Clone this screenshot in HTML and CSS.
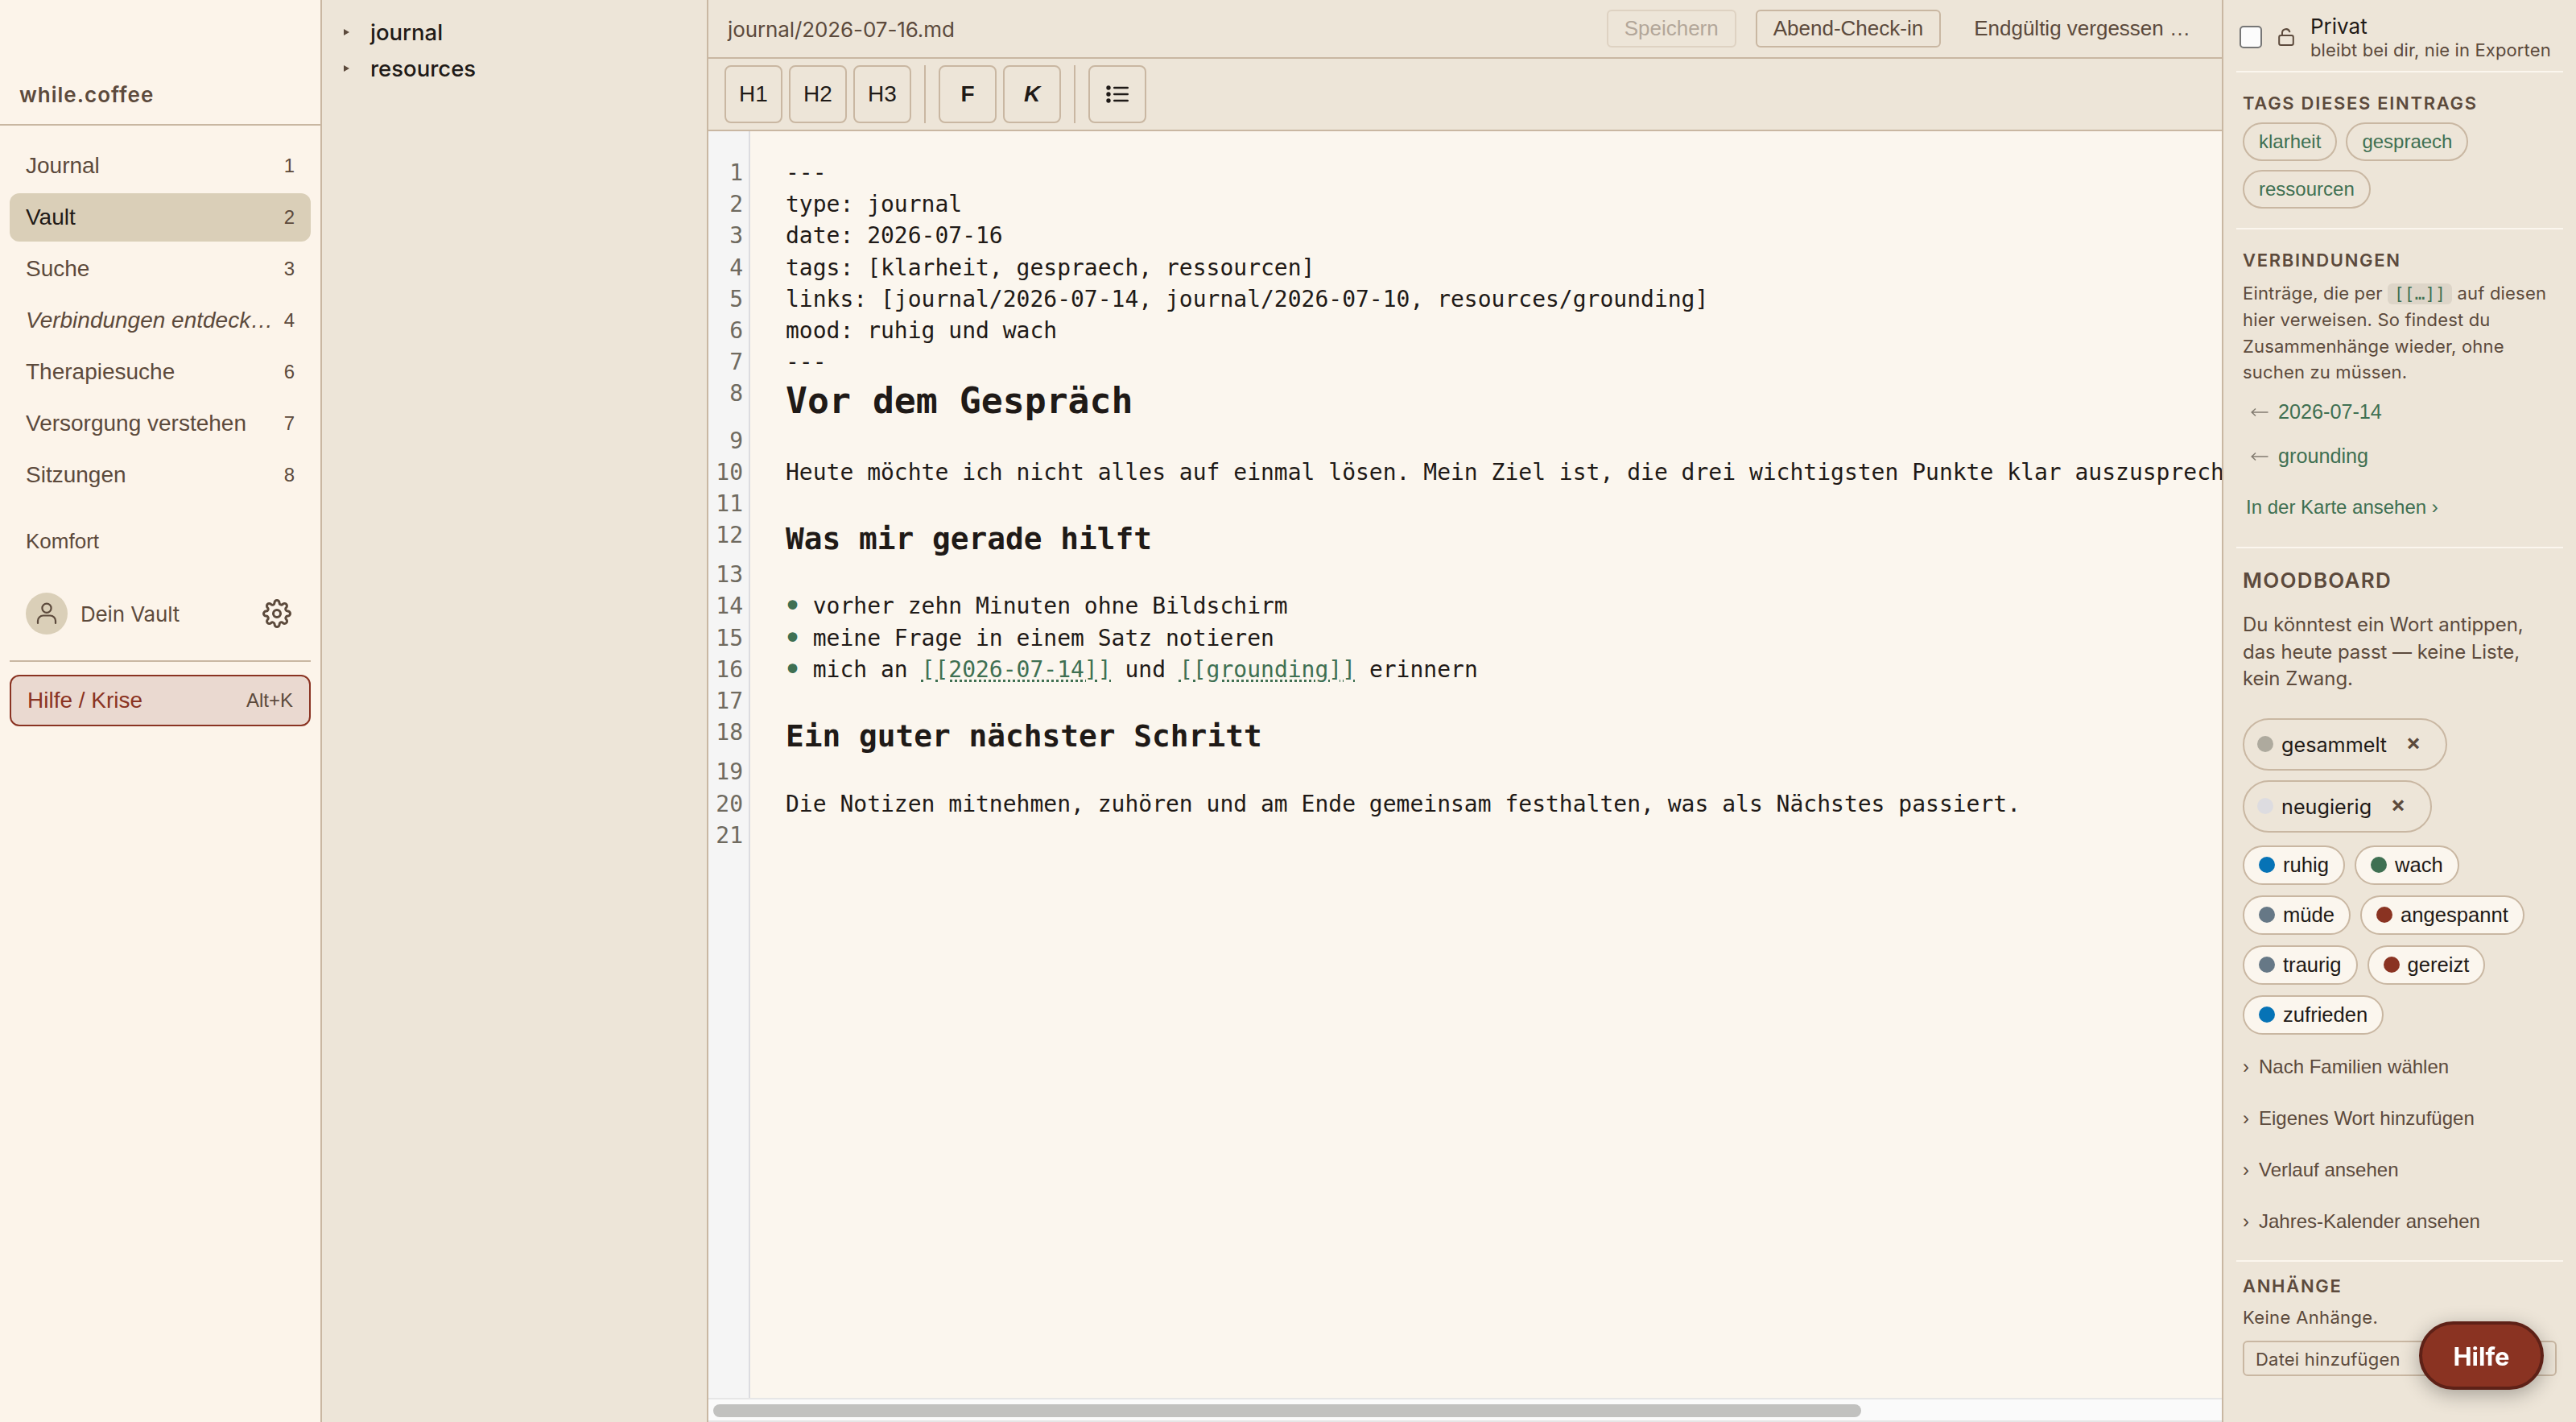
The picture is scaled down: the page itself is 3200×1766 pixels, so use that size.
FILE: index.html
```html
<!DOCTYPE html>
<html lang="de">
<head>
  <meta charset="UTF-8">
  <meta name="viewport" content="width=device-width, initial-scale=1">
  <title>while.coffee</title>
  <link rel="stylesheet" href="styles.css">
</head>
<body>
  <div class="app">

    <!-- Sidebar -->
    <aside class="sidebar">
      <div class="brand">while.coffee</div>
      <nav class="nav">
        <a class="nav-item"><span class="nav-label">Journal</span><kbd>1</kbd></a>
        <a class="nav-item active"><span class="nav-label">Vault</span><kbd>2</kbd></a>
        <a class="nav-item"><span class="nav-label">Suche</span><kbd>3</kbd></a>
        <a class="nav-item"><span class="nav-label discover">Verbindungen entdecken</span><kbd>4</kbd></a>
        <a class="nav-item"><span class="nav-label">Therapiesuche</span><kbd>6</kbd></a>
        <a class="nav-item"><span class="nav-label">Versorgung verstehen</span><kbd>7</kbd></a>
        <a class="nav-item"><span class="nav-label">Sitzungen</span><kbd>8</kbd></a>
      </nav>
      <a class="comfort">Komfort</a>
      <div class="account">
        <span class="avatar">
          <svg width="28" height="28" viewBox="0 0 28 28" fill="none" stroke="currentColor" stroke-width="2.2" stroke-linecap="round">
            <circle cx="14" cy="7.3" r="5.6"/>
            <path d="M3 26v-3a6.500 6.500 0 0 1 6.500-6.500h9a6.500 6.500 0 0 1 6.500 6.500v3"/>
          </svg>
        </span>
        <span class="account-name">Dein Vault</span>
        <svg class="gear" width="36" height="36" viewBox="0 0 24 24" fill="none" stroke="currentColor" stroke-width="2" stroke-linecap="round" stroke-linejoin="round">
          <circle cx="12" cy="12" r="3"/>
          <path d="M19.4 15a1.65 1.65 0 0 0 .33 1.82l.06.06a2 2 0 0 1-2.83 2.83l-.06-.06a1.65 1.65 0 0 0-1.82-.33 1.65 1.65 0 0 0-1 1.51V21a2 2 0 0 1-4 0v-.09A1.65 1.65 0 0 0 9 19.4a1.65 1.65 0 0 0-1.82.33l-.06.06a2 2 0 0 1-2.83-2.83l.06-.06a1.65 1.65 0 0 0 .33-1.82 1.65 1.65 0 0 0-1.51-1H3a2 2 0 0 1 0-4h.09A1.65 1.65 0 0 0 4.6 9a1.65 1.65 0 0 0-.33-1.82l-.06-.06a2 2 0 0 1 2.83-2.83l.06.06a1.65 1.65 0 0 0 1.82.33H9a1.65 1.65 0 0 0 1-1.51V3a2 2 0 0 1 4 0v.09a1.65 1.65 0 0 0 1 1.51 1.65 1.65 0 0 0 1.82-.33l.06-.06a2 2 0 0 1 2.83 2.83l-.06.06a1.65 1.65 0 0 0-.33 1.82V9a1.65 1.65 0 0 0 1.51 1H21a2 2 0 0 1 0 4h-.09a1.65 1.65 0 0 0-1.51 1z"/>
        </svg>
      </div>
      <div class="crisis-wrap">
        <a class="crisis"><span>Hilfe / Krise</span><kbd>Alt+K</kbd></a>
      </div>
    </aside>

    <!-- File tree -->
    <section class="tree">
      <div class="folder"><i class="caret"></i><span>journal</span></div>
      <div class="folder"><i class="caret"></i><span>resources</span></div>
    </section>

    <!-- Editor -->
    <main class="editor">
      <header class="file-bar">
        <span class="file-path">journal/2026-07-16.md</span>
        <button class="btn" disabled>Speichern</button>
        <button class="btn">Abend-Check-in</button>
        <button class="btn plain">Endgültig vergessen …</button>
      </header>
      <div class="toolbar">
        <button class="tool">H1</button>
        <button class="tool">H2</button>
        <button class="tool">H3</button>
        <span class="sep"></span>
        <button class="tool bold">F</button>
        <button class="tool bold italic">K</button>
        <span class="sep"></span>
        <button class="tool">
          <svg width="28" height="22" viewBox="0 0 28 22" fill="currentColor">
            <circle cx="3" cy="3" r="2.7"/><circle cx="3" cy="11" r="2.7"/><circle cx="3" cy="19" r="2.7"/>
            <rect x="9" y="1.7" width="19" height="2.6" rx="1.3"/><rect x="9" y="9.7" width="19" height="2.6" rx="1.3"/><rect x="9" y="17.7" width="19" height="2.6" rx="1.3"/>
          </svg>
        </button>
      </div>
      <div class="code">
        <div class="gutter">
          <div>1</div><div>2</div><div>3</div><div>4</div><div>5</div><div>6</div><div>7</div>
          <div class="h1">8</div><div>9</div><div>10</div><div>11</div>
          <div class="h2">12</div><div>13</div><div>14</div><div>15</div><div>16</div><div>17</div>
          <div class="h2">18</div><div>19</div><div>20</div><div>21</div>
        </div>
        <div class="lines">
          <div class="line">---</div>
          <div class="line">type: journal</div>
          <div class="line">date: 2026-07-16</div>
          <div class="line">tags: [klarheit, gespraech, ressourcen]</div>
          <div class="line">links: [journal/2026-07-14, journal/2026-07-10, resources/grounding]</div>
          <div class="line">mood: ruhig und wach</div>
          <div class="line">---</div>
          <div class="line h1">Vor dem Gespräch</div>
          <div class="line"></div>
          <div class="line">Heute möchte ich nicht alles auf einmal lösen. Mein Ziel ist, die drei wichtigsten Punkte klar auszusprechen.</div>
          <div class="line"></div>
          <div class="line h2">Was mir gerade hilft</div>
          <div class="line"></div>
          <div class="line"><span class="bullet">•</span> vorher zehn Minuten ohne Bildschirm</div>
          <div class="line"><span class="bullet">•</span> meine Frage in einem Satz notieren</div>
          <div class="line"><span class="bullet">•</span> mich an <span class="wikilink">[[2026-07-14]]</span> und <span class="wikilink">[[grounding]]</span> erinnern</div>
          <div class="line"></div>
          <div class="line h2">Ein guter nächster Schritt</div>
          <div class="line"></div>
          <div class="line">Die Notizen mitnehmen, zuhören und am Ende gemeinsam festhalten, was als Nächstes passiert.</div>
          <div class="line"></div>
        </div>
      </div>
      <div class="scrollbar"><div class="thumb"></div></div>
    </main>

    <!-- Details panel -->
    <aside class="panel">
      <label class="private">
        <span class="checkbox"></span>
        <svg width="20" height="22" viewBox="0 0 20 22" fill="none" stroke="currentColor" stroke-width="2" stroke-linecap="round">
          <rect x="1.2" y="9" width="17.6" height="12" rx="2.2"/>
          <path d="M5 9V6a4.800 4.800 0 0 1 9.300-1.700"/>
        </svg>
        <span class="private-text"><span class="private-title">Privat</span><span class="private-hint">bleibt bei dir, nie in Exporten</span></span>
      </label>

      <section class="block tags">
        <h3>TAGS DIESES EINTRAGS</h3>
        <div class="tag-list">
          <span class="tag">klarheit</span>
          <span class="tag">gespraech</span>
          <span class="tag">ressourcen</span>
        </div>
      </section>

      <section class="block links">
        <h3>VERBINDUNGEN</h3>
        <p>Einträge, die per <code>[[…]]</code> auf diesen<br>hier verweisen. So findest du<br>Zusammenhänge wieder, ohne<br>suchen zu müssen.</p>
        <a class="backlink"><svg width="22" height="12" viewBox="0 0 22 12" fill="none" stroke="currentColor" stroke-width="1.5"><path d="M21.500 6H1M6 1.500 1.200 6 6 10.500"/></svg><span>2026-07-14</span></a>
        <a class="backlink"><svg width="22" height="12" viewBox="0 0 22 12" fill="none" stroke="currentColor" stroke-width="1.5"><path d="M21.500 6H1M6 1.500 1.200 6 6 10.500"/></svg><span>grounding</span></a>
        <a class="map-link">In der Karte ansehen ›</a>
      </section>

      <section class="block mood">
        <h2>MOODBOARD</h2>
        <p>Du könntest ein Wort antippen,<br>das heute passt — keine Liste,<br>kein Zwang.</p>
        <div class="picked"><i class="dot grey"></i><span>gesammelt</span><b>✕</b></div>
        <div class="picked"><i class="dot pale"></i><span>neugierig</span><b>✕</b></div>
        <div class="words">
          <span class="word"><i class="dot blue"></i>ruhig</span>
          <span class="word"><i class="dot green"></i>wach</span>
          <span class="word"><i class="dot slate"></i>müde</span>
          <span class="word"><i class="dot red"></i>angespannt</span>
          <span class="word"><i class="dot slate"></i>traurig</span>
          <span class="word"><i class="dot red"></i>gereizt</span>
          <span class="word"><i class="dot blue"></i>zufrieden</span>
        </div>
        <div class="more"><span>›</span>Nach Familien wählen</div>
        <div class="more"><span>›</span>Eigenes Wort hinzufügen</div>
        <div class="more"><span>›</span>Verlauf ansehen</div>
        <div class="more"><span>›</span>Jahres-Kalender ansehen</div>
      </section>

      <section class="block files">
        <h3>ANHÄNGE</h3>
        <p>Keine Anhänge.</p>
        <button class="add-file">Datei hinzufügen</button>
      </section>
    </aside>
  </div>

  <button class="help">Hilfe</button>
</body>
</html>
```

FILE: styles.css
```css
* {
  margin: 0;
  padding: 0;
  box-sizing: border-box;
}

:root {
  --paper: #fbf6ee;
  --cream: #fcf4ea;
  --sand: #ede5d8;
  --line: #c9b7a2;
  --active: #dacfb8;
  --text: #1f1a17;
  --muted: #5c4a3c;
  --green: #3f7052;
  --red: #8a3322;
}

body {
  width: 3200px;
  height: 1766px;
  overflow: hidden;
  font-family: "Liberation Sans", Arial, sans-serif;
  font-size: 28px;
  color: var(--muted);
  background: var(--sand);
}

button {
  font-family: inherit;
  color: inherit;
  background: none;
}

kbd {
  font-family: inherit;
  font-size: 24px;
}

.app {
  display: flex;
  height: 1766px;
}

/* Sidebar */
.sidebar {
  flex: none;
  width: 400px;
  border-right: 2px solid var(--line);
  background: var(--cream);
}

.brand {
  height: 156px;
  padding: 102px 24px 0;
  border-bottom: 2px solid var(--line);
  font-family: Inter, sans-serif;
  font-size: 26px;
  line-height: 32px;
  font-weight: 600;
  letter-spacing: 1px;
}

.nav {
  display: flex;
  flex-direction: column;
  gap: 4px;
  padding: 20px 12px 0;
}

.nav-item {
  display: flex;
  align-items: center;
  gap: 12px;
  height: 60px;
  padding: 0 20px;
  border-radius: 12px;
}

.nav-item.active {
  background: var(--active);
}

.nav-item.active .nav-label {
  color: var(--text);
}

.nav-label {
  flex: 1;
  min-width: 0;
  overflow: hidden;
  white-space: nowrap;
  text-overflow: ellipsis;
}

.discover {
  font-style: italic;
}

.comfort {
  display: block;
  padding: 22px 32px 0;
  font-size: 26px;
  line-height: 60px;
}

.account {
  display: flex;
  align-items: center;
  height: 52px;
  margin: 34px 36px 0 32px;
}

.avatar {
  display: flex;
  align-items: center;
  justify-content: center;
  width: 52px;
  height: 52px;
  border-radius: 50%;
  background: var(--active);
}

.account-name {
  flex: 1;
  padding-left: 16px;
  font-family: Inter, sans-serif;
  font-size: 26px;
  letter-spacing: -0.15px;
}

.crisis-wrap {
  margin: 32px 12px 0;
  padding-top: 16px;
  border-top: 2px solid var(--line);
}

.crisis {
  display: flex;
  align-items: center;
  justify-content: space-between;
  height: 64px;
  padding: 0 20px;
  border: 2px solid var(--red);
  border-radius: 12px;
  background: #ead9d0;
  color: var(--red);
}

.crisis kbd {
  color: var(--muted);
}

/* File tree */
.tree {
  flex: none;
  width: 480px;
  padding-top: 17px;
  border-right: 2px solid var(--line);
  color: var(--text);
}

.folder {
  display: flex;
  align-items: center;
  height: 45px;
  padding-left: 27px;
  font-family: Inter, sans-serif;
  font-size: 27.5px;
  font-weight: 500;
}

.caret {
  width: 33px;
}

.caret::before {
  content: "";
  display: block;
  width: 0;
  border-left: 7px solid var(--muted);
  border-top: 4px solid transparent;
  border-bottom: 4px solid transparent;
}

/* Editor */
.editor {
  display: flex;
  flex-direction: column;
  flex: none;
  width: 1880px;
}

.file-bar {
  display: flex;
  align-items: center;
  gap: 24px;
  height: 73px;
  padding: 0 17px 0 24px;
  border-bottom: 2px solid var(--line);
}

.file-path {
  flex: 1;
  padding-top: 2px;
  font-family: Inter, sans-serif;
  font-size: 26px;
  letter-spacing: -0.1px;
}

.btn {
  height: 47px;
  padding: 0 20px;
  border: 2px solid var(--line);
  border-radius: 6px;
  font-size: 26px;
}

.btn:disabled {
  opacity: 0.4;
}

.btn.plain {
  border-color: transparent;
  margin-left: -5px;
}

.toolbar {
  display: flex;
  gap: 8px;
  height: 90px;
  padding: 8px 20px;
  border-bottom: 2px solid var(--line);
}

.tool {
  display: flex;
  align-items: center;
  justify-content: center;
  width: 72px;
  height: 72px;
  border: 2px solid var(--line);
  border-radius: 8px;
  font-size: 28px;
  color: var(--text);
}

.bold {
  font-weight: 700;
}

.italic {
  font-style: italic;
}

.sep {
  width: 2px;
  height: 72px;
  margin: 0 8px;
  background: var(--line);
}

.code {
  display: flex;
  flex: 1;
  min-height: 0;
  overflow: hidden;
  background: var(--paper);
  font-family: "DejaVu Sans Mono", monospace;
  line-height: 39.2px;
}

.gutter {
  flex: none;
  width: 52px;
  padding: 32px 7px 0 0;
  border-right: 2px solid #dcdce0;
  background: #f5f5f5;
  color: #6f6a5f;
  text-align: right;
}

.gutter div {
  height: 39.2px;
}

.gutter .h1 {
  height: 58.2px;
}

.gutter .h2 {
  height: 49.2px;
}

.lines {
  padding: 32px 0 0 44px;
  color: var(--text);
}

.line {
  height: 39.2px;
  white-space: pre;
}

.line.h1 {
  height: 58.2px;
  font-size: 44.8px;
  line-height: 58.2px;
  font-weight: 700;
}

.line.h2 {
  height: 49.2px;
  font-size: 37.8px;
  line-height: 49.2px;
  font-weight: 700;
}

.bullet {
  display: inline-block;
  width: 16.86px;
  font-size: 40px;
  line-height: 0;
  vertical-align: -4px;
  text-indent: -3.5px;
  color: var(--green);
}

.wikilink {
  color: var(--green);
  text-decoration: underline dotted 2.5px;
  text-underline-offset: 3px;
}

.scrollbar {
  height: 30px;
  padding: 6px;
  border-top: 2px solid #e6e6e6;
  border-bottom: 2px solid #e6e6e6;
  background: #fafafa;
}

.thumb {
  width: 1426px;
  height: 16px;
  border-radius: 8px;
  background: #c1c1bf;
}

/* Details panel */
.panel {
  flex: 1;
  padding: 0 16px;
  border-left: 2px solid var(--line);
  font-family: Inter, sans-serif;
}

.private {
  display: flex;
  align-items: center;
  height: 90px;
  padding: 4px 4px 0;
  border-bottom: 2px solid var(--paper);
}

.checkbox {
  width: 28px;
  height: 28px;
  margin-right: 20px;
  border: 2px solid #767676;
  border-radius: 5px;
  background: #fcfcfc;
}

.private-text {
  display: flex;
  flex-direction: column;
  padding: 2px 0 0 20px;
  white-space: nowrap;
}

.private-title {
  font-size: 26px;
  line-height: 30px;
  color: var(--text);
}

.private-hint {
  font-size: 22px;
  line-height: 28px;
  letter-spacing: 0.12px;
}

.block {
  padding: 0 8px;
  border-bottom: 2px solid var(--paper);
}

.block h3 {
  font-size: 22px;
  line-height: 28px;
  font-weight: 600;
  letter-spacing: 1.7px;
}

.tags {
  height: 195px;
  padding-top: 24px;
}

.tag-list {
  display: flex;
  flex-wrap: wrap;
  gap: 11px;
  padding-top: 10px;
}

.tag {
  height: 48px;
  padding: 0 18px;
  border: 2px solid var(--line);
  border-radius: 24px;
  font-family: "Liberation Sans", Arial, sans-serif;
  font-size: 24px;
  line-height: 44px;
  color: var(--green);
}

.links {
  height: 396px;
  padding-top: 24px;
}

.links p {
  padding: 11px 0 6px;
  font-size: 22px;
  line-height: 32.3px;
  letter-spacing: 0.18px;
  white-space: nowrap;
}

.links code {
  padding: 1px 8px;
  border-radius: 6px;
  background: #ddd5c8;
  font-family: "DejaVu Sans Mono", monospace;
  font-size: 21px;
  color: var(--green);
}

.backlink {
  display: flex;
  align-items: center;
  gap: 12px;
  height: 55px;
  padding-left: 10px;
  font-family: "Liberation Sans", Arial, sans-serif;
  font-size: 25.2px;
  color: var(--green);
}

.backlink svg {
  color: #827b70;
}

.map-link {
  display: block;
  padding: 6px 4px 0;
  font-family: "Liberation Sans", Arial, sans-serif;
  font-size: 24px;
  line-height: 60px;
  color: var(--green);
}

.mood {
  height: 886px;
  padding-top: 24px;
}

.mood h2 {
  font-size: 26px;
  line-height: 32px;
  font-weight: 600;
  letter-spacing: 1.3px;
}

.mood p {
  padding: 22px 0 32px;
  font-size: 24px;
  line-height: 33.6px;
  letter-spacing: -0.04px;
  white-space: nowrap;
}

.picked {
  display: flex;
  align-items: center;
  width: fit-content;
  height: 65px;
  margin-bottom: 12px;
  padding: 0 31px 0 16px;
  border: 2px solid var(--line);
  border-radius: 33px;
  font-size: 25.2px;
  color: var(--text);
}

.picked span {
  padding: 1px 24px 0 10px;
}

.picked b {
  width: 18px;
  font-family: "DejaVu Sans", sans-serif;
  font-size: 21px;
  text-align: center;
  color: var(--muted);
  -webkit-text-stroke: 1.2px var(--muted);
}

.dot {
  flex: none;
  width: 20px;
  height: 20px;
  border-radius: 50%;
}

.dot.grey { background: #aeaa9e; }
.dot.pale { background: #dddce0; }
.dot.blue { background: #0673b6; }
.dot.green { background: #3f7052; }
.dot.slate { background: #667886; }
.dot.red { background: #8a3322; }

.words {
  display: flex;
  flex-wrap: wrap;
  gap: 13px 12px;
  padding-top: 4px;
}

.word {
  display: flex;
  align-items: center;
  gap: 10px;
  height: 49px;
  padding: 0 18px;
  border: 2px solid var(--line);
  border-radius: 25px;
  background: var(--paper);
  font-family: "Liberation Sans", Arial, sans-serif;
  font-size: 25.6px;
  color: var(--text);
}

.more {
  display: flex;
  height: 64px;
  font-family: "Liberation Sans", Arial, sans-serif;
  font-size: 24px;
  line-height: 64px;
}

.more span {
  width: 20px;
}

.words + .more {
  margin-top: 8px;
}

.files {
  padding-top: 16px;
  border-bottom: 0;
}

.files p {
  padding-top: 9px;
  font-size: 22px;
  line-height: 32px;
  letter-spacing: 0.35px;
}

.add-file {
  display: block;
  width: 390px;
  height: 44px;
  margin-top: 13px;
  padding: 2px 14px 0;
  border: 2px solid var(--line);
  border-radius: 6px;
  font-size: 22px;
  letter-spacing: 0.2px;
  text-align: left;
}

/* Floating help button */
.help {
  position: fixed;
  right: 40px;
  bottom: 40px;
  width: 155px;
  height: 85px;
  padding-top: 2px;
  border: 4px solid #5e2117;
  border-radius: 43px;
  background: var(--red);
  box-shadow: 0 6px 24px rgba(0, 0, 0, 0.3);
  font-family: Inter, sans-serif;
  font-size: 31px;
  font-weight: 700;
  color: #fff;
}
```
